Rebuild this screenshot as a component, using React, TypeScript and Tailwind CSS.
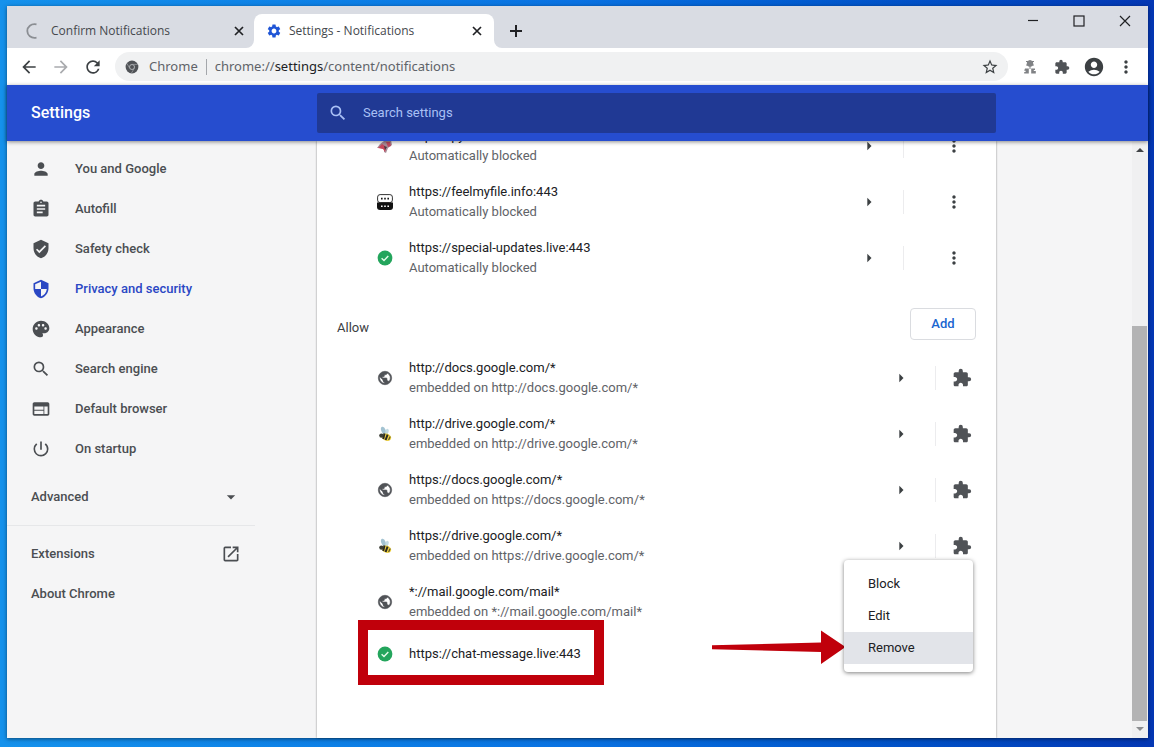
import React from "react";
import {
  MdAccountCircle,
  MdArrowBack,
  MdArrowDropDown,
  MdArrowForward,
  MdArrowRight,
  MdAssignment,
  MdExtension,
  MdMoreVert,
  MdOpenInNew,
  MdPalette,
  MdPerson,
  MdPowerSettingsNew,
  MdRefresh,
  MdSearch,
  MdSecurity,
  MdSettings,
  MdStarBorder,
  MdVerifiedUser,
  MdWeb,
} from "react-icons/md";

const nav = [
  { label: "You and Google", Icon: MdPerson },
  { label: "Autofill", Icon: MdAssignment },
  { label: "Safety check", Icon: MdVerifiedUser },
  { label: "Privacy and security", Icon: MdSecurity, active: true },
  { label: "Appearance", Icon: MdPalette },
  { label: "Search engine", Icon: MdSearch },
  { label: "Default browser", Icon: MdWeb },
  { label: "On startup", Icon: MdPowerSettingsNew },
];

type SiteIcon = "rocket" | "robot" | "check" | "globe" | "bee";
type Site = { url: string; note: string; icon: SiteIcon };

const blocked: Site[] = [
  { url: "https://pylon.me", note: "Automatically blocked", icon: "rocket" },
  { url: "https://feelmyfile.info:443", note: "Automatically blocked", icon: "robot" },
  { url: "https://special-updates.live:443", note: "Automatically blocked", icon: "check" },
];

const allowed: Site[] = [
  { url: "http://docs.google.com/*", note: "embedded on http://docs.google.com/*", icon: "globe" },
  { url: "http://drive.google.com/*", note: "embedded on http://drive.google.com/*", icon: "bee" },
  { url: "https://docs.google.com/*", note: "embedded on https://docs.google.com/*", icon: "globe" },
  { url: "https://drive.google.com/*", note: "embedded on https://drive.google.com/*", icon: "bee" },
  { url: "*://mail.google.com/mail*", note: "embedded on *://mail.google.com/mail*", icon: "globe" },
];

function Favicon({ name }: { name: SiteIcon }) {
  if (name === "globe")
    return (
      <svg viewBox="0 0 24 24" className="size-4 shrink-0" fill="#505357" stroke="#505357" strokeWidth=".9">
        <path d="M12 2C6.48 2 2 6.48 2 12s4.48 10 10 10 10-4.48 10-10S17.52 2 12 2zm-1 17.93c-3.95-.49-7-3.85-7-7.93 0-.62.08-1.21.21-1.79L9 15v1c0 1.1.9 2 2 2v1.93zm6.9-2.54c-.26-.81-1-1.39-1.9-1.39h-1v-3c0-.55-.45-1-1-1H8v-2h2c.55 0 1-.45 1-1V7h2c1.1 0 2-.9 2-2v-.41c2.93 1.19 5 4.06 5 7.41 0 2.08-.8 3.97-2.1 5.39z" />
      </svg>
    );
  if (name === "check")
    return (
      <svg viewBox="0 0 16 16" className="size-4 shrink-0">
        <circle cx="8" cy="8" r="7.4" fill="#23a55c" />
        <path d="M4.6 8.2l2.4 2.3 4.3-4.6" fill="none" stroke="#e4fbe9" strokeWidth="1.4" />
      </svg>
    );
  if (name === "robot")
    return (
      <svg viewBox="0 0 16 16" className="size-4 shrink-0">
        <rect x=".6" y=".6" width="14.8" height="8" rx="2.5" fill="#fff" stroke="#333" strokeWidth="1" />
        <path d="M0 8.6h16V13a3 3 0 0 1-3 3H3a3 3 0 0 1-3-3z" fill="#111" />
        <path d="M4 4.6h1.6M7.2 4.6h1.6M10.4 4.6H12" stroke="#111" strokeWidth="1.6" />
        <path d="M4 12.2h1.6M7.2 12.2h1.6M10.4 12.2H12" stroke="#fff" strokeWidth="1.6" />
      </svg>
    );
  if (name === "rocket")
    return (
      <svg viewBox="0 0 16 16" className="size-4 shrink-0">
        <path d="M0 10l3-4 4-3 7-1 1 5-4 3-2 5-2-1 0-3-4-1z" fill="#a98c98" />
        <path d="M1 10l4-4 3 2 1 2-1 4-2-3z" fill="#c8485c" />
        <path d="M9 4l4 0 1 4-3 1z" fill="#c04a60" />
        <path d="M7 8l3 1-2 3z" fill="#4a3840" />
      </svg>
    );
  return (
    <svg viewBox="0 0 16 16" className="size-4 shrink-0">
      <ellipse cx="6.5" cy="4.5" rx="2.2" ry="4" transform="rotate(-22 6.5 4.5)" fill="#a3c3d2" />
      <ellipse cx="10" cy="5.6" rx="1.6" ry="2.8" transform="rotate(20 10 5.6)" fill="#c3dbe3" />
      <ellipse cx="9.5" cy="11.2" rx="4.8" ry="3.6" transform="rotate(20 9.5 11.2)" fill="#efd140" />
      <path d="M7.5 7.5L6.2 13M10.6 8.6L8.6 14" stroke="#2b2a20" strokeWidth="2" />
      <path d="M13.2 10.5l-1.6 3.6" stroke="#57512a" strokeWidth="1.2" />
      <circle cx="4.4" cy="9.6" r="2.2" fill="#3c3e35" />
    </svg>
  );
}

function CloseIcon() {
  return (
    <svg viewBox="0 0 14 14" className="size-[14px]">
      <path d="M3 3l8 8M11 3l-8 8" stroke="currentColor" strokeWidth="1.7" />
    </svg>
  );
}

function SiteRow({ site, managed = false }: { site: Site; managed?: boolean }) {
  return (
    <li className="flex h-14 items-center gap-4 pr-6 pl-15">
      <Favicon name={site.icon} />
      <div className="min-w-0 flex-1 leading-5">
        <div className="text-[#202124]">{site.url}</div>
        <div className="truncate text-[#5f6368]">{site.note}</div>
      </div>
      <div className="flex items-center">
        <button aria-label={"Details for " + site.url} className="text-[#3c4043]">
          <MdArrowRight className="size-5" />
        </button>
        <span className={managed ? "ml-6 h-6 w-px bg-[#ececee]" : "mr-2 ml-6 h-6 w-px bg-[#ececee]"} />
        <button
          aria-label={(managed ? "Managed by extension: " : "More actions for ") + site.url}
          className={managed ? "ml-4 text-[#505357]" : "mr-2 ml-8 text-[#3c4043]"}
        >
          {managed ? <MdExtension className="size-5" /> : <MdMoreVert className="size-5" />}
        </button>
      </div>
    </li>
  );
}

function TabStrip() {
  return (
    <div className="flex h-[42px] shrink-0 items-stretch bg-[#d9dce3] pt-2 font-['Open_Sans',sans-serif] text-[12px]">
      <div className="flex w-[247px] items-center pr-2 pl-[18px]" role="tab" aria-selected="false">
        <svg viewBox="0 0 16 16" className="size-4 shrink-0">
          <path d="M11.5 1.4C6 .2 2.3 4 2.3 8s3.7 7.8 9.2 6.6" fill="none" stroke="#8b8e93" strokeWidth="1.8" />
        </svg>
        <span className="ml-[10px] flex-1 truncate text-[#45484d]">Confirm Notifications</span>
        <button aria-label="Close Confirm Notifications" className="text-[#202124]">
          <CloseIcon />
        </button>
      </div>
      <div
        className="relative flex w-60 items-center rounded-t-lg bg-white pr-[10px] pl-3"
        role="tab"
        aria-selected="true"
      >
        <svg viewBox="0 0 8 8" className="absolute bottom-0 -left-2 size-2">
          <path d="M8 0v8H0a8 8 0 0 0 8-8z" fill="#fff" />
        </svg>
        <svg viewBox="0 0 8 8" className="absolute -right-2 bottom-0 size-2">
          <path d="M0 0v8h8a8 8 0 0 1-8-8z" fill="#fff" />
        </svg>
        <MdSettings className="size-4 shrink-0 text-[#1f55d6]" />
        <span className="ml-[7px] flex-1 truncate text-[#45484d]">Settings - Notifications</span>
        <button aria-label="Close Settings" className="text-[#202124]">
          <CloseIcon />
        </button>
      </div>
      <button aria-label="New tab" className="ml-[14px] text-[#202124]">
        <svg viewBox="0 0 16 16" className="size-4">
          <path d="M8 2v12M2 8h12" stroke="currentColor" strokeWidth="2" />
        </svg>
      </button>
      <div className="ml-auto flex items-start gap-[30px] pr-[15px] text-[#202124]">
        <button aria-label="Minimize">
          <svg viewBox="0 0 16 16" className="size-4">
            <path d="M3 6.5h10" stroke="currentColor" strokeWidth="1.2" />
          </svg>
        </button>
        <button aria-label="Maximize">
          <svg viewBox="0 0 16 16" className="size-4">
            <rect x="3" y="2" width="10" height="10" fill="none" stroke="currentColor" strokeWidth="1.2" />
          </svg>
        </button>
        <button aria-label="Close window">
          <svg viewBox="0 0 16 16" className="size-4">
            <path d="M3 2l10 10M13 2L3 12" stroke="currentColor" strokeWidth="1.2" />
          </svg>
        </button>
      </div>
    </div>
  );
}

function Toolbar() {
  return (
    <div className="flex h-[37px] shrink-0 items-center gap-3 bg-white px-3 text-[#3c4043]">
      <button aria-label="Back">
        <MdArrowBack className="size-5" />
      </button>
      <button aria-label="Forward" className="text-[#a9abae]">
        <MdArrowForward className="size-5" />
      </button>
      <button aria-label="Reload">
        <MdRefresh className="size-5" />
      </button>
      <div className="flex h-[29px] flex-1 items-center rounded-full bg-[#f0f1f2] px-[10px] font-['Noto_Sans',sans-serif] text-[13px] text-[#5f6368]">
        <svg viewBox="0 0 14 14" className="size-[14px] shrink-0">
          <circle cx="7" cy="7" r="6.4" fill="#505357" />
          <circle cx="7" cy="7" r="2.5" fill="none" stroke="#b9bbbe" strokeWidth=".9" />
          <path d="M7 4.4h5.8M4.8 8.3l-3-5M9.3 8.3l-3 5" stroke="#a5a8ab" strokeWidth=".7" />
        </svg>
        <span className="ml-[10px]">Chrome</span>
        <span className="mx-2 h-4 w-px bg-[#a4a7ab]" />
        <div role="textbox" aria-label="Address" className="min-w-0 flex-1 truncate">
          chrome://<span className="text-[#202124]">settings</span>/content/notifications
        </div>
        <button aria-label="Bookmark this page" className="text-[#3c4043]">
          <MdStarBorder className="-m-[1px] size-[18px]" />
        </button>
      </div>
      <button aria-label="Extension">
        <svg viewBox="0 0 20 20" className="size-5" fill="#808285">
          <circle cx="10" cy="6.5" r="3.2" />
          <path d="M6 4.5h8M6 8h8M10 3v9" stroke="#808285" strokeWidth="1" />
          <path d="M5 11.4h3.8v5.2H4.2v-1.6h1.4v-1.2H4.2zM11.2 11.4H15v1.6h-1.2v1h2v2.6h-4.6z" />
        </svg>
      </button>
      <button aria-label="Extensions menu" className="text-[#505357]">
        <MdExtension className="mx-[2px] size-4" />
      </button>
      <button aria-label="Profile">
        <MdAccountCircle className="-m-[1px] size-[22px]" />
      </button>
      <button aria-label="Browser menu">
        <MdMoreVert className="size-5" />
      </button>
    </div>
  );
}

function Sidebar() {
  return (
    <nav className="w-[310px] shrink-0 pt-2 font-medium text-[#4b4e52]">
      {nav.map(({ label, Icon, active }) => (
        <a
          key={label}
          href="#"
          className={
            active ? "flex h-10 items-center gap-6 pl-6 text-[#2a47c4]" : "flex h-10 items-center gap-6 pl-6"
          }
        >
          <Icon className="size-5" />
          {label}
        </a>
      ))}
      <div className="w-[248px]">
        <button className="mt-2 flex h-10 w-full items-center justify-between pr-[14px] pl-6">
          Advanced
          <MdArrowDropDown className="size-5" />
        </button>
        <hr className="my-2 border-[#e6e7e9]" />
        <a href="#" className="flex h-10 items-center justify-between pr-[14px] pl-6">
          Extensions
          <MdOpenInNew className="size-5" />
        </a>
        <a href="#" className="flex h-10 items-center pl-6">
          About Chrome
        </a>
      </div>
    </nav>
  );
}

function Scrollbar() {
  return (
    <div className="flex w-4 shrink-0 flex-col bg-[#f0f0f1]" aria-hidden="true">
      <svg viewBox="0 0 16 17" className="h-[17px] w-4 shrink-0">
        <path d="M4 11l4-4 4 4z" fill="#404346" />
      </svg>
      <div className="grow-[168]" />
      <div className="mr-px grow-[394] bg-[#b3b3b4]" />
      <svg viewBox="0 0 16 17" className="h-[17px] w-4 shrink-0">
        <path d="M4 6l4 4 4-4z" fill="#8b8d90" />
      </svg>
    </div>
  );
}

export default function App() {
  return (
    <div className="flex h-screen flex-col bg-linear-to-r from-[#1592ec] via-[#0a72e2] to-[#0437b4] pt-[6px] pr-[6px] pb-[9px] pl-[7px] font-[Roboto,sans-serif] text-[13px]">
      <div className="flex min-h-0 flex-1 flex-col bg-[#f5f5f6] shadow-[0_1px_4px_rgba(0,0,0,0.5)]">
        <TabStrip />
        <Toolbar />
        <header className="z-10 flex h-14 shrink-0 items-center bg-[#264dcf] shadow-[0_1px_4px_rgba(0,0,0,0.45)]">
          <h1 className="w-[310px] shrink-0 pl-6 text-[16px] font-medium text-white">Settings</h1>
          <label className="flex h-10 w-full max-w-[679px] items-center gap-[15px] rounded-xs bg-[#203994] px-[11px] text-[#a9c0f5]">
            <MdSearch className="size-5" />
            <input
              type="text"
              aria-label="Search settings"
              placeholder="Search settings"
              className="min-w-0 flex-1 bg-transparent outline-none placeholder:text-[#a9c0f5]"
            />
          </label>
        </header>
        <div className="flex min-h-0 flex-1">
          <Sidebar />
          <main className="w-full max-w-[679px] overflow-hidden bg-white shadow-[0_0_2px_rgba(0,0,0,0.45)]">
            <div className="-mt-[23px]">
              <ul>
                {blocked.map((s) => (
                  <SiteRow key={s.url} site={s} />
                ))}
              </ul>
              <div className="flex justify-between px-5 pt-[22px] pb-[10px]">
                <h2 className="pt-[10px] leading-5 text-[#3c4043]">Allow</h2>
                <button className="h-8 w-[66px] rounded-sm border border-[#dadce0] font-medium text-[#1a66d0]">
                  Add
                </button>
              </div>
              <ul>
                {allowed.map((s) => (
                  <SiteRow key={s.url} site={s} managed />
                ))}
                <li className="relative flex h-12 items-center gap-4 pl-15 text-[#202124]">
                  <Favicon name="check" />
                  https://chat-message.live:443
                  <div className="absolute -top-[10px] left-[41px] h-[65px] w-[246px] border-10 border-[#c0000b]" />
                  <svg viewBox="0 0 134 34" className="absolute top-0 right-[150px] h-[34px] w-[134px]">
                    <path d="M0 15.2L109 12.6V.6L133.5 17 109 34V22L0 19.2z" fill="#c0000b" />
                  </svg>
                  <div
                    role="menu"
                    className="absolute right-[23px] bottom-[6px] flex w-[129px] flex-col rounded-sm bg-white py-2 shadow-[0_1px_4px_rgba(0,0,0,0.5)]"
                  >
                    <button role="menuitem" className="h-8 px-6 text-left">
                      Block
                    </button>
                    <button role="menuitem" className="h-8 px-6 text-left">
                      Edit
                    </button>
                    <button role="menuitem" className="h-8 bg-[#e2e4e9] px-6 text-left">
                      Remove
                    </button>
                  </div>
                </li>
              </ul>
            </div>
          </main>
          <div className="flex-1" />
          <Scrollbar />
        </div>
      </div>
    </div>
  );
}
